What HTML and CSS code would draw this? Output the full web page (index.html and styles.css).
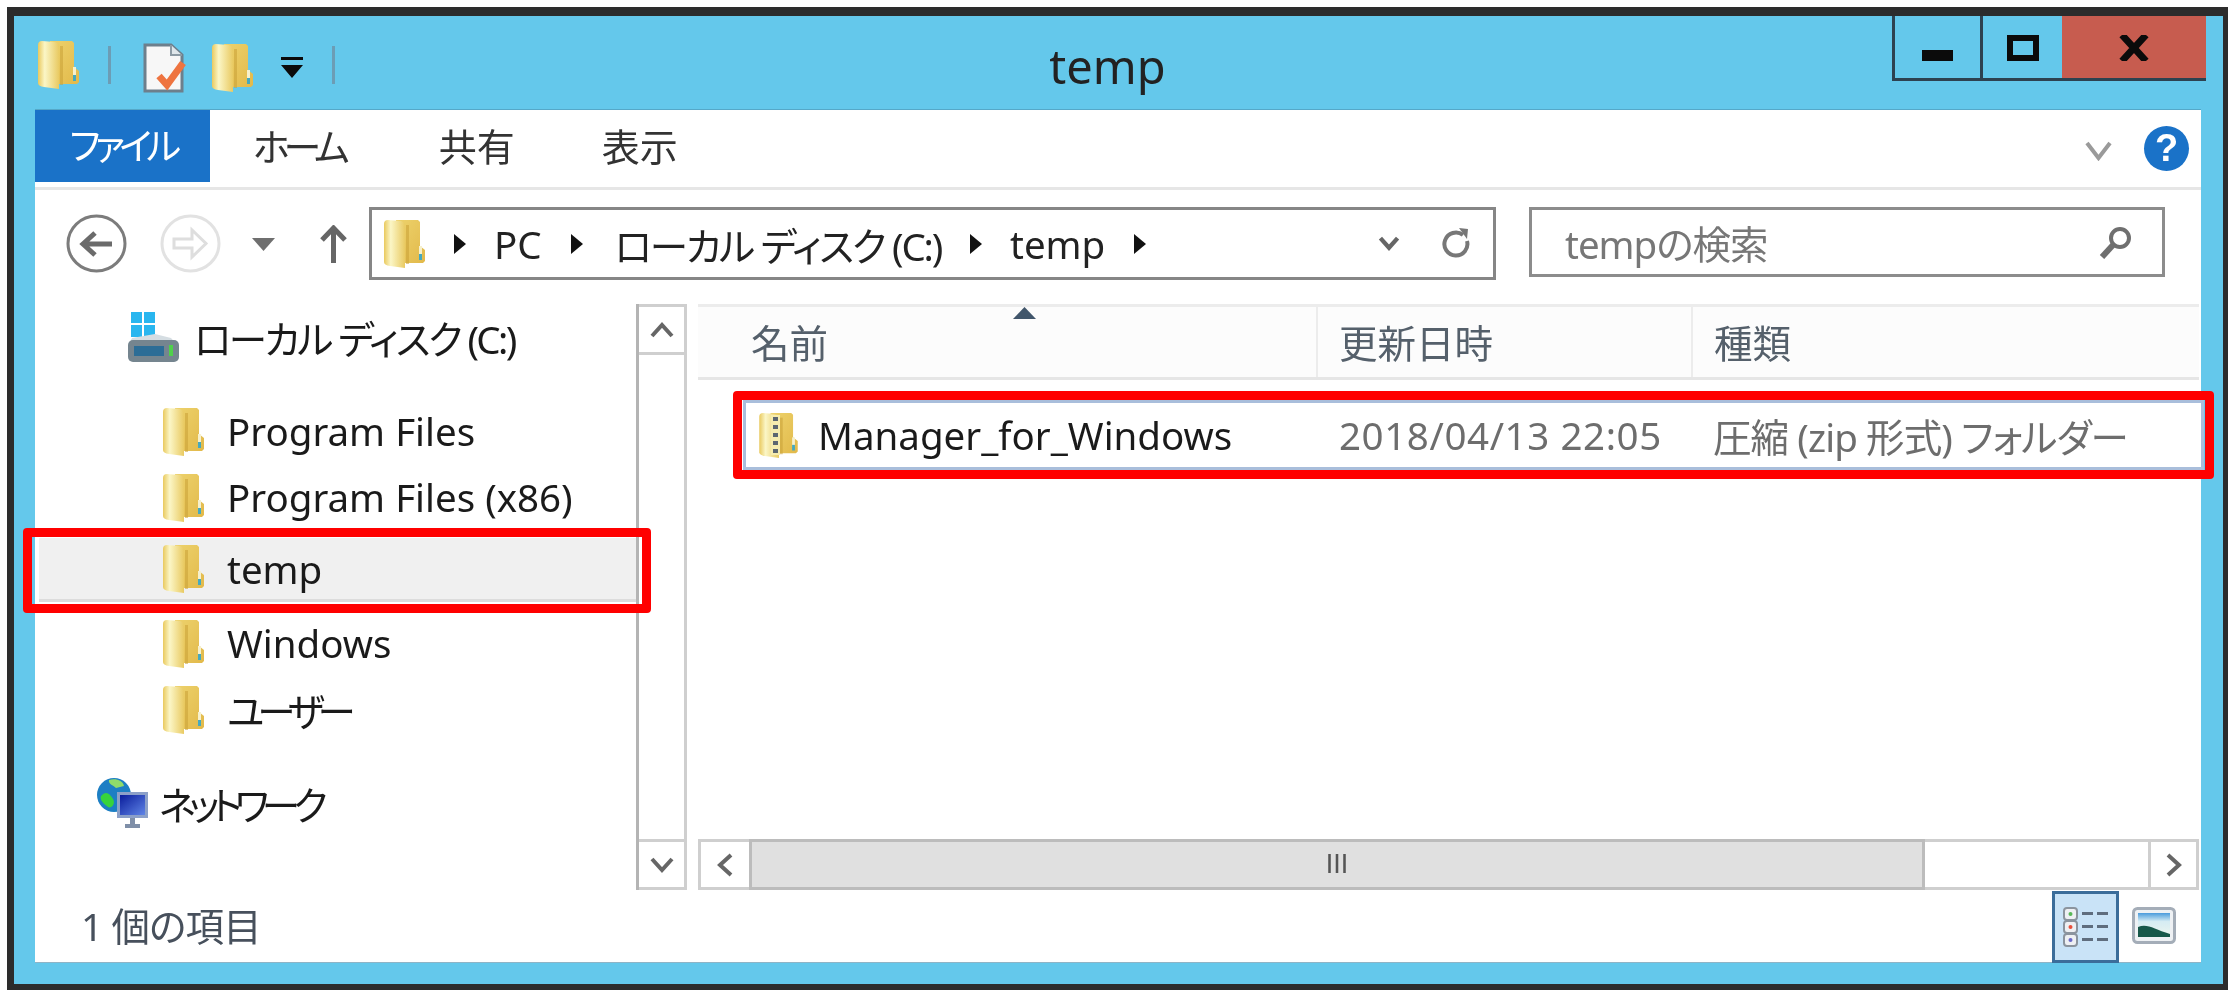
FILE: index.html
```html
<!DOCTYPE html>
<html lang="ja">
<head>
  <meta charset="UTF-8">
  <title>temp</title>
  <link rel="stylesheet" href="styles.css">
</head>
<body>

  <svg class="icon-defs" aria-hidden="true">
    <defs>
      <linearGradient id="folderFront" x1="0" y1="0" x2="1" y2="0">
        <stop offset="0" stop-color="#e9c95e"/>
        <stop offset=".32" stop-color="#fbf6c6"/>
        <stop offset="1" stop-color="#e9ca62"/>
      </linearGradient>
      <linearGradient id="folderBack" x1="0" y1="0" x2="1" y2="1">
        <stop offset="0" stop-color="#edd26c"/>
        <stop offset="1" stop-color="#e2b94a"/>
      </linearGradient>
      <linearGradient id="screenFill" x1="0" y1="0" x2="1" y2="1">
        <stop offset="0" stop-color="#0a1d9c"/>
        <stop offset="1" stop-color="#5f84e6"/>
      </linearGradient>
      <linearGradient id="thumbSky" x1="0" y1="0" x2="0" y2="1">
        <stop offset="0" stop-color="#4a9bdc"/>
        <stop offset=".35" stop-color="#d5ecf3"/>
        <stop offset="1" stop-color="#eef6ee"/>
      </linearGradient>
      <symbol id="folder" viewBox="0 0 41 49">
        <path d="M12 1h22l2 2v24l5 4v11l-2 2H12z" fill="url(#folderBack)"/>
        <path d="M22 6h3v39h-3z" fill="#c9a136" opacity=".55"/>
        <path d="M0 5q0-4 4-4l13 1q4 1 4 5v42l-15-2q-6-1-6-4z" fill="url(#folderFront)"/>
        <path d="M35 27h3v10h-3z" fill="#f6f0cc"/>
        <path d="M35 35h3v6h-3z" fill="#45a9bf"/>
      </symbol>
    </defs>
  </svg>

  <div class="window">

    <div class="titlebar">
      <div class="quick-access">
        <svg class="folder-icon"><use href="#folder"/></svg>
        <span class="qa-sep"></span>
        <svg class="doc-icon" viewBox="0 0 47 50">
          <path d="M2 2h26l11 10v36H2z" fill="#f7f7f7" stroke="#6d7f8c" stroke-width="3"/>
          <path d="M28 2v10h11" fill="#dfe6ea" stroke="#8c9aa4" stroke-width="2"/>
          <path d="M16 33l8 9 16-22" fill="none" stroke="#ee7440" stroke-width="7"/>
        </svg>
        <svg class="folder-icon qa-folder"><use href="#folder"/></svg>
        <svg class="qa-dropdown" viewBox="0 0 22 21">
          <path d="M0 0h22v3H0zM0 8h22L11 21z" fill="#0b0b0b"/>
        </svg>
        <span class="qa-sep"></span>
      </div>
      <div class="title">temp</div>
      <div class="window-controls">
        <div class="ctl ctl-min"><span class="glyph-min"></span></div>
        <div class="ctl ctl-max"><span class="glyph-max"></span></div>
        <div class="ctl ctl-close">
          <svg width="30" height="26" viewBox="0 0 30 26"><path d="M3 0l12 13L27 0M3 26l12-13 12 13" fill="none" stroke="#0b0b0b" stroke-width="7"/></svg>
        </div>
      </div>
    </div>

    <div class="panel">

      <div class="ribbon">
        <div class="tab tab-file">ファイル</div>
        <div class="tab tab-home">ホーム</div>
        <div class="tab tab-share">共有</div>
        <div class="tab tab-view">表示</div>
        <svg class="ribbon-chevron" viewBox="0 0 27 20"><path d="M2 2l11.500 15L25 2" fill="none" stroke="#9a9a9a" stroke-width="4"/></svg>
        <div class="help">?</div>
      </div>

      <div class="navbar">
        <svg class="nav-round" viewBox="0 0 61 59">
          <ellipse cx="30.500" cy="29.500" rx="28.500" ry="27.500" fill="none" stroke="#7c7c7c" stroke-width="3"/>
          <path d="M46 30H18M29 19L17 30l12 11" fill="none" stroke="#6b6b6b" stroke-width="5"/>
        </svg>
        <svg class="nav-round nav-forward" viewBox="0 0 61 59">
          <ellipse cx="30.500" cy="29.500" rx="28.500" ry="27.500" fill="none" stroke="#e2e2e2" stroke-width="3"/>
          <path d="M14 25h18V16l14 13.500L32 43v-9H14z" fill="none" stroke="#dedede" stroke-width="3"/>
        </svg>
        <svg class="nav-down" viewBox="0 0 23 13"><path d="M0 0h23L11.500 13z" fill="#6f6f6f"/></svg>
        <svg class="nav-up" viewBox="0 0 27 38"><path d="M13.500 38V3M2 15L13.500 3 25 15" fill="none" stroke="#666" stroke-width="5"/></svg>

        <div class="address">
          <svg class="folder-icon"><use href="#folder"/></svg>
          <span class="crumb-arrow"></span>
          <span class="crumb">PC</span>
          <span class="crumb-arrow"></span>
          <span class="crumb crumb-kana">ローカル ディスク (C:)</span>
          <span class="crumb-arrow"></span>
          <span class="crumb">temp</span>
          <span class="crumb-arrow"></span>
          <svg class="address-chevron" viewBox="0 0 20 14"><path d="M2 2l8 9 8-9" fill="none" stroke="#666" stroke-width="4"/></svg>
          <svg class="address-refresh" viewBox="0 0 30 34">
            <path d="M25 14a11.500 11.500 0 1 1-4-6" fill="none" stroke="#777" stroke-width="4"/>
            <path d="M17 1l9 1-1 10z" fill="#777"/>
          </svg>
        </div>

        <div class="search">
          <span class="search-text">tempの検索</span>
          <svg class="search-icon" viewBox="0 0 33 33">
            <circle cx="21" cy="12" r="9" fill="none" stroke="#6f6f6f" stroke-width="4"/>
            <path d="M14 19L3 31" fill="none" stroke="#6f6f6f" stroke-width="6"/>
          </svg>
        </div>
      </div>

      <div class="main">
        <div class="tree">
          <div class="tree-row tree-drive">
            <svg class="drive-icon" viewBox="0 0 51 50">
              <path d="M3 0h11v11H3zM16 0h11v11H16zM3 13h11v12H3zM16 13h11v12H16z" fill="#29b6ef"/>
              <path d="M27 22l16 4 7 8H0l4-8z" fill="#d5dde2"/>
              <rect x="0" y="28" width="51" height="22" rx="5" fill="#75858f"/>
              <rect x="6" y="34" width="30" height="10" fill="#2c6d96"/>
              <rect x="41" y="33" width="4" height="11" fill="#4fd14a"/>
            </svg>
            <span class="drive-label">ローカル ディスク (C:)</span>
          </div>
          <div class="tree-row tree-child"><svg class="folder-icon"><use href="#folder"/></svg><span>Program Files</span></div>
          <div class="tree-row tree-child"><svg class="folder-icon"><use href="#folder"/></svg><span>Program Files (x86)</span></div>
          <div class="tree-row tree-child tree-active">
            <svg class="folder-icon"><use href="#folder"/></svg><span>temp</span>
            <div class="red-mark red-mark-tree"></div>
          </div>
          <div class="tree-row tree-child"><svg class="folder-icon"><use href="#folder"/></svg><span>Windows</span></div>
          <div class="tree-row tree-child"><svg class="folder-icon"><use href="#folder"/></svg><span class="label-tight">ユーザー</span></div>
          <div class="tree-row tree-network">
            <svg class="network-icon" viewBox="0 0 51 51">
              <circle cx="17" cy="17" r="17" fill="#1d7fc4"/>
              <path d="M4 18c5-6 9-2 12 3s-2 10-5 8S2 22 4 18z" fill="#37d33c"/>
              <path d="M12 2c6-2 14 0 15 6l-8 2c-3-3-8-4-7-8z" fill="#8fdc6a"/>
              <rect x="20" y="14" width="31" height="26" fill="#8ca0c8"/>
              <rect x="23" y="17" width="25" height="20" fill="url(#screenFill)"/>
              <path d="M33 40h5v6h5v4H28v-4h5z" fill="#7f8fa8"/>
            </svg>
            <span class="label-tight">ネットワーク</span>
          </div>
        </div>

        <div class="vscroll">
          <div class="scroll-btn scroll-btn-up">
            <svg width="24" height="16" viewBox="0 0 24 16"><path d="M2 14L12 3l10 11" fill="none" stroke="#666" stroke-width="4"/></svg>
          </div>
          <div class="vscroll-track"></div>
          <div class="scroll-btn scroll-btn-down">
            <svg width="24" height="16" viewBox="0 0 24 16"><path d="M2 2l10 11L22 2" fill="none" stroke="#666" stroke-width="4"/></svg>
          </div>
        </div>

        <div class="list">
          <div class="list-header">
            <div class="col-head col-name">名前
              <svg class="sort-arrow" viewBox="0 0 23 12"><path d="M11.500 0L23 12H0z" fill="#41566b"/></svg>
            </div>
            <div class="col-head col-date">更新日時</div>
            <div class="col-head col-type">種類</div>
          </div>

          <div class="list-body">
            <div class="file-row">
              <div class="file-name">
                <svg class="zip-icon" viewBox="0 0 45 46">
                  <use href="#folder" width="45" height="46"/>
                  <path d="M15 3h9v40h-9z" fill="#f6ecae"/>
                  <path d="M17 5h5v4h-5zM17 13h5v4h-5zM17 21h5v4h-5zM17 29h5v4h-5zM17 37h5v4h-5z" fill="#5c6670"/>
                </svg>
                <span>Manager_for_Windows</span>
              </div>
              <div class="file-date">2018/04/13 22:05</div>
              <div class="file-type">圧縮 (zip 形式) フォルダー</div>
              <div class="red-mark red-mark-file"></div>
            </div>
          </div>

          <div class="hscroll">
            <div class="scroll-btn hscroll-btn">
              <svg width="16" height="24" viewBox="0 0 16 24"><path d="M14 2L3 12l11 10" fill="none" stroke="#666" stroke-width="4"/></svg>
            </div>
            <div class="hscroll-thumb">III</div>
            <div class="hscroll-track"></div>
            <div class="scroll-btn hscroll-btn hscroll-btn-right">
              <svg width="16" height="24" viewBox="0 0 16 24"><path d="M2 2l11 10L2 22" fill="none" stroke="#666" stroke-width="4"/></svg>
            </div>
          </div>
        </div>
      </div>

      <div class="statusbar">
        <div class="status-text">1 個の項目</div>
        <div class="view-btn view-btn-active">
          <svg width="46" height="40" viewBox="0 0 46 40">
            <g fill="#eef0f3" stroke="#8b949e" stroke-width="2">
              <rect x="1" y="1" width="13" height="12" rx="3"/>
              <rect x="1" y="14" width="13" height="12" rx="3"/>
              <rect x="1" y="27" width="13" height="12" rx="3"/>
            </g>
            <circle cx="7.500" cy="7" r="2" fill="#58b858"/>
            <circle cx="7.500" cy="20" r="2" fill="#e8503c"/>
            <circle cx="7.500" cy="33" r="2" fill="#6a6ac8"/>
            <path d="M19 5h11v3H19zM34 5h11v3H34zM19 18h11v3H19zM34 18h11v3H34zM19 31h11v3H19zM34 31h11v3H34z" fill="#5f6d7e"/>
          </svg>
        </div>
        <svg class="view-thumb" viewBox="0 0 44 37">
          <rect x="1.500" y="1.500" width="41" height="34" rx="4" fill="#eef1f4" stroke="#a4adb8" stroke-width="3"/>
          <rect x="6" y="6" width="32" height="24" fill="url(#thumbSky)"/>
          <path d="M6 20c9-4 16 2 32 7v3H6z" fill="#17584a"/>
        </svg>
      </div>
    </div>
  </div>

</body>
</html>
```

FILE: styles.css
```css
* {
  box-sizing: border-box;
}

body {
  margin: 0;
  background: #fff;
  font-family: "Noto Sans", "Noto Sans CJK JP", sans-serif;
  font-size: 38.5px;
  font-feature-settings: "palt";
  color: #1a1a1a;
}

.icon-defs {
  position: absolute;
  width: 0;
  height: 0;
}

.window {
  width: 2221px;
  height: 983px;
  margin: 7px 0 0 7px;
  border-style: solid;
  border-color: #2c2c2c;
  border-width: 9px 5px 6px 7px;
  background: #64c8eb;
  display: flex;
  flex-direction: column;
  filter: blur(0.6px);
}

/* title bar */
.titlebar {
  height: 93px;
  display: flex;
  padding: 0 17px 0 24px;
  flex: none;
}

.quick-access {
  display: flex;
  align-items: center;
  height: 75px;
  margin-top: 11px;
}

.folder-icon {
  width: 41px;
  height: 49px;
  flex: none;
}

.qa-sep {
  width: 3px;
  height: 38px;
  background: #6c9db5;
  margin: 0 0 0 29px;
}

.doc-icon {
  width: 47px;
  height: 50px;
  margin-left: 32px;
  margin-top: 6px;
}

.qa-folder {
  margin-left: 22px;
  margin-top: 5px;
}

.qa-dropdown {
  width: 22px;
  height: 21px;
  margin-left: 28px;
  margin-top: 6px;
}

.title {
  flex: 1;
  text-align: center;
  font-size: 47px;
  line-height: 100px;
  padding-right: 12px;
  color: #222;
}

.window-controls {
  display: flex;
  height: 65px;
}

.ctl {
  display: flex;
  align-items: flex-start;
  justify-content: center;
  border-bottom: 3px solid #2d4250;
  border-left: 3px solid #2d4250;
}

.ctl-min {
  width: 88px;
}

.ctl-max {
  width: 82px;
}

.ctl-close {
  width: 144px;
  background: #c75c4f;
  padding-top: 19px;
  border-left: none;
}

.glyph-min {
  width: 31px;
  height: 11px;
  margin-top: 34px;
  background: #0b0b0b;
}

.glyph-max {
  width: 32px;
  height: 26px;
  margin-top: 19px;
  border: 6px solid #0b0b0b;
}

/* white area */
.panel {
  flex: 1;
  margin: 0 22px 21px 21px;
  background: #fff;
  border-top: 1px solid #55a8c8;
  display: flex;
  flex-direction: column;
  min-height: 0;
}

.ribbon {
  height: 80px;
  flex: none;
  display: flex;
  align-items: flex-start;
  border-bottom: 3px solid #e6e6e6;
}

.tab {
  font-size: 38px;
  line-height: 72px;
  color: #333;
}

.tab-file {
  width: 175px;
  height: 72px;
  background: #1a72c8;
  color: #fff;
  text-align: center;
  font-size: 37px;
  letter-spacing: -5.5px;
}

.tab-home {
  margin-left: 43px;
  letter-spacing: -6px;
}

.tab-share {
  margin-left: 95px;
}

.tab-view {
  margin-left: 87px;
}

.ribbon-chevron {
  width: 27px;
  height: 20px;
  margin: 31px 0 0 auto;
}

.help {
  width: 45px;
  height: 45px;
  margin: 16px 12px 0 32px;
  border-radius: 50%;
  background: #1a72c8;
  color: #fff;
  font-family: "Liberation Sans", sans-serif;
  font-size: 38px;
  font-weight: 700;
  line-height: 45px;
  text-align: center;
}

.navbar {
  height: 114px;
  flex: none;
  display: flex;
  align-items: flex-start;
  padding: 17px 35px 0 31px;
}

.nav-round {
  width: 61px;
  height: 59px;
  margin-top: 7px;
  flex: none;
}

.nav-forward {
  margin-left: 33px;
}

.nav-down {
  width: 23px;
  height: 13px;
  margin: 31px 0 0 31px;
  flex: none;
}

.nav-up {
  width: 27px;
  height: 38px;
  margin: 18px 0 0 45px;
  flex: none;
}

.address {
  width: 1127px;
  height: 73px;
  margin-left: 22px;
  border: 3px solid #868686;
  display: flex;
  align-items: center;
  padding-left: 12px;
  flex: none;
  color: #222;
}

.crumb-arrow {
  width: 0;
  height: 0;
  border-left: 12px solid #111;
  border-top: 10px solid transparent;
  border-bottom: 10px solid transparent;
  margin-left: 29px;
  flex: none;
}

.crumb {
  margin-left: 28px;
  white-space: nowrap;
}

.crumb-kana {
  margin-left: 32px;
  letter-spacing: -2.2px;
}

.address-chevron {
  width: 22px;
  height: 15px;
  margin-left: auto;
}

.address-refresh {
  width: 30px;
  height: 34px;
  margin: 0 21px 0 42px;
}

.search {
  width: 636px;
  height: 70px;
  margin-left: 33px;
  border: 3px solid #8c8c8c;
  display: flex;
  align-items: center;
  padding: 0 30px 0 33px;
  flex: none;
  color: #777;
  letter-spacing: -1px;
}

.search-text {
  flex: 1;
}

.search-icon {
  width: 33px;
  height: 33px;
}

/* tree + list */
.main {
  flex: 1;
  display: flex;
  min-height: 0;
}

.tree {
  width: 601px;
  flex: none;
}

.tree-row {
  height: 66px;
  display: flex;
  align-items: center;
  position: relative;
  white-space: nowrap;
}

.label-tight {
  letter-spacing: -7px;
}

.drive-label {
  letter-spacing: -2.6px;
}

.tree-drive {
  padding-left: 93px;
  margin-bottom: 28px;
}

.drive-icon {
  width: 51px;
  height: 50px;
  margin-right: 15px;
  flex: none;
}

.tree-child {
  padding-left: 128px;
}

.tree-child .folder-icon {
  margin-right: 23px;
}

.tree-active {
  height: 64px;
  margin: 8px 0;
  margin-left: 4px;
  padding-left: 124px;
  background: #f0f0f0;
  border-bottom: 3px solid #dcdcdc;
}

.tree-network {
  padding-left: 62px;
  margin-top: 28px;
}

.network-icon {
  width: 51px;
  height: 51px;
  margin-right: 11px;
  flex: none;
}

.red-mark {
  position: absolute;
  border: 9px solid #f00;
  border-radius: 4px;
}

.red-mark-tree {
  top: -10px;
  bottom: -14px;
  left: -16px;
  right: -15px;
}

.vscroll {
  width: 51px;
  flex: none;
  display: flex;
  flex-direction: column;
  border-left: 3px solid #b4b4b4;
  border-right: 3px solid #cfcfcf;
}

.scroll-btn {
  height: 51px;
  flex: none;
  display: flex;
  align-items: center;
  justify-content: center;
}

.scroll-btn-up {
  border-top: 3px solid #cfcfcf;
  border-bottom: 3px solid #cfcfcf;
}

.scroll-btn-down {
  border-top: 3px solid #cfcfcf;
  border-bottom: 3px solid #cfcfcf;
}

.vscroll-track {
  flex: 1;
}

.list {
  flex: 1;
  margin-left: 11px;
  margin-right: 2px;
  display: flex;
  flex-direction: column;
  min-width: 0;
}

.list-header {
  height: 76px;
  flex: none;
  display: flex;
  background: #fcfcfc;
  border-top: 3px solid #ececec;
  border-bottom: 3px solid #e6e6e6;
}

.col-head {
  color: #55606b;
  line-height: 72px;
  position: relative;
}

.col-name {
  width: 620px;
  padding-left: 53px;
  border-right: 2px solid #ececec;
}

.col-date {
  width: 375px;
  padding-left: 21px;
  border-right: 2px solid #ececec;
}

.col-type {
  flex: 1;
  padding-left: 21px;
}

.sort-arrow {
  position: absolute;
  left: 315px;
  top: 0;
  width: 23px;
  height: 12px;
}

.list-body {
  flex: 1;
  padding: 20px 0 0 45px;
}

.file-row {
  height: 70px;
  margin-right: -5px;
  position: relative;
  display: grid;
  grid-template-columns: 593px 374px 1fr;
  align-items: center;
  border: 3px solid #a9bedb;
  background: #fff;
  white-space: nowrap;
}

.file-name {
  display: flex;
  align-items: center;
  padding-left: 10px;
}

.zip-icon {
  width: 45px;
  height: 46px;
  margin-right: 17px;
  flex: none;
}

.file-date,
.file-type {
  color: #6d6d6d;
}

.file-date {
  letter-spacing: 0.6px;
}

.file-type {
  letter-spacing: -0.9px;
}

.red-mark-file {
  top: -12px;
  bottom: -12px;
  left: -13px;
  right: -13px;
}

.hscroll {
  height: 51px;
  flex: none;
  display: flex;
}

.hscroll-btn {
  width: 51px;
  border: 3px solid #cfcfcf;
  border-right: none;
}

.hscroll-btn-right {
  border-right: 3px solid #cfcfcf;
}

.hscroll-thumb {
  width: 1176px;
  background: #e0e0e0;
  border: 3px solid #bcbcbc;
  text-align: center;
  font-family: "Liberation Sans", sans-serif;
  font-size: 27px;
  line-height: 45px;
  color: #555;
}

.hscroll-track {
  flex: 1;
  border-top: 3px solid #cfcfcf;
  border-bottom: 3px solid #cfcfcf;
}

.statusbar {
  height: 73px;
  flex: none;
  display: flex;
  align-items: flex-start;
  border-bottom: 1px solid #8fb4c6;
}

.status-text {
  line-height: 72px;
  margin-left: 46px;
  padding-right: 37px;
  color: #47505c;
  margin-right: auto;
  letter-spacing: -0.8px;
}

.view-btn {
  width: 67px;
  height: 72px;
  margin-top: 1px;
  background: #c9e3f7;
  border: 3px solid #3b6d9a;
  display: flex;
  align-items: center;
  justify-content: center;
}

.view-thumb {
  width: 44px;
  height: 37px;
  margin: 17px 25px 0 13px;
}
```
